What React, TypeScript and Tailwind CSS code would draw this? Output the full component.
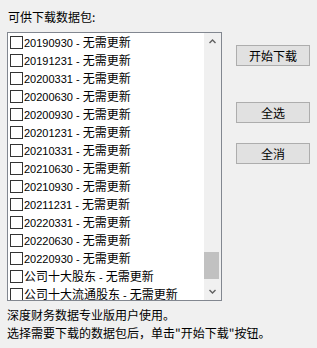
import { useState } from 'react'

const ITEMS: { code: string; label: string }[] = [
  { code: '20190930', label: '' },
  { code: '20191231', label: '' },
  { code: '20200331', label: '' },
  { code: '20200630', label: '' },
  { code: '20200930', label: '' },
  { code: '20201231', label: '' },
  { code: '20210331', label: '' },
  { code: '20210630', label: '' },
  { code: '20210930', label: '' },
  { code: '20211231', label: '' },
  { code: '20220331', label: '' },
  { code: '20220630', label: '' },
  { code: '20220930', label: '' },
  { code: '', label: '公司十大股东' },
  { code: '', label: '公司十大流通股东' },
]

const FONT = { fontFamily: '"Noto Sans CJK SC", sans-serif' }
const LATIN = { fontFamily: '"Liberation Sans", sans-serif' }

function Chevron({ up }: { up?: boolean }) {
  return (
    <svg width="7" height="5" viewBox="0 0 7 5" className="block">
      <path d={up ? 'M0.5 4 L3.5 1 L6.5 4' : 'M0.5 1 L3.5 4 L6.5 1'} fill="none" stroke="#606060" strokeWidth="1.4" />
    </svg>
  )
}

function WinButton({ children }: { children: string }) {
  return (
    <button
      type="button"
      className="flex h-[21px] w-[74px] items-center justify-center border border-[#adadad] bg-[#e1e1e1] text-[12px] leading-none text-black"
    >
      {children}
    </button>
  )
}

export default function App() {
  const [checked, setChecked] = useState<boolean[]>(() => ITEMS.map(() => false))

  return (
    <div className="flex h-[348px] w-[317px] overflow-hidden bg-[#f0f0f0] text-[12px] text-black" style={FONT}>
      <div className="flex w-[222px] shrink-0 flex-col">
        <div className="ml-[8px] mt-[8px] h-[18px] leading-[18px]">可供下载数据包:</div>
        <div className="ml-[7px] mt-[6px] flex h-[269px] w-[215px] border border-[#828790] bg-white">
          <div className="flex-1 overflow-hidden">
            {ITEMS.map((item, index) => (
              <div
                key={index}
                className="flex h-[18px] shrink-0 cursor-default items-start"
                onClick={() => setChecked((c) => c.map((v, i) => (i === index ? !v : v)))}
              >
                <span className="ml-[2px] mt-[3px] flex h-[13px] w-[13px] shrink-0 items-center justify-center border border-[#333333] bg-white text-[10px] leading-none">
                  {checked[index] ? '✓' : ''}
                </span>
                <span className="whitespace-nowrap pl-[1px] leading-[18px]">
                  {item.code ? (
                    <span className="text-[11px]" style={LATIN}>
                      {item.code}
                    </span>
                  ) : (
                    item.label
                  )}
                  <span className="text-[11px]" style={LATIN}>
                    {' - '}
                  </span>
                  无需更新
                </span>
              </div>
            ))}
          </div>
          <div className="flex w-[17px] flex-col bg-[#f0f0f0]">
            <div className="flex h-[17px] items-center justify-center">
              <Chevron up />
            </div>
            <div className="flex flex-1 flex-col justify-end pb-[4px]">
              <div className="h-[27px] w-[15px] bg-[#c1c1c1]" />
            </div>
            <div className="flex h-[17px] items-center justify-center">
              <Chevron />
            </div>
          </div>
        </div>
        <div className="ml-[7px] mt-[5px] whitespace-nowrap leading-[18px]">
          <p>深度财务数据专业版用户使用。</p>
          <p>选择需要下载的数据包后，单击"开始下载"按钮。</p>
        </div>
      </div>
      <div className="ml-[14px] flex flex-col pt-[45px]">
        <WinButton>开始下载</WinButton>
        <div className="mt-[36px]">
          <WinButton>全选</WinButton>
        </div>
        <div className="mt-[20px]">
          <WinButton>全消</WinButton>
        </div>
      </div>
    </div>
  )
}
